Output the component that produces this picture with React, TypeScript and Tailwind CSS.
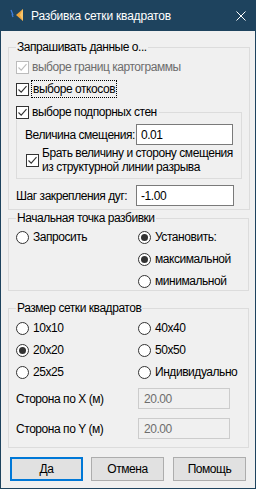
import React from 'react';

function Check({ checked, disabled }: { checked?: boolean; disabled?: boolean }) {
  const c = disabled ? '#bcbcbc' : '#333333';
  return (
    <span
      className={`flex h-[13px] w-[13px] shrink-0 items-center justify-center border bg-white ${
        disabled ? 'border-[#bcbcbc]' : 'border-[#333333]'
      }`}
    >
      {checked && (
        <svg width="11" height="11" viewBox="0 0 11 11">
          <path d="M1.5 5.5 L4.2 8.2 L9.5 2.2" fill="none" stroke={c} strokeWidth="1.1" />
        </svg>
      )}
    </span>
  );
}

function Radio({ checked }: { checked?: boolean }) {
  return (
    <span className="flex h-[13px] w-[13px] shrink-0 items-center justify-center rounded-full border border-[#333333] bg-white">
      {checked && <span className="h-[7px] w-[7px] rounded-full bg-[#333333]" />}
    </span>
  );
}

function RadioItem({ label, checked }: { label: string; checked?: boolean }) {
  return (
    <div className="flex h-[16px] items-center gap-[4px]">
      <Radio checked={checked} />
      <span>{label}</span>
    </div>
  );
}

function Field({ value, disabled, w }: { value: string; disabled?: boolean; w: string }) {
  return (
    <div
      className={`flex h-[21px] shrink-0 items-center border ${w} ${
        disabled
          ? 'border-[#cccccc] bg-[#f0f0f0] pl-[5px] text-[#6d6d6d]'
          : 'border-[#7a7a7a] bg-white pl-[4px] text-black'
      }`}
    >
      {value}
    </div>
  );
}

export default function App() {
  return (
    <div className="h-[489px] w-[256px] overflow-hidden whitespace-nowrap bg-[#1e435e] font-['Liberation_Sans',Arial,sans-serif] text-[12px] leading-[16px] tracking-[-0.45px] text-black">
      {/* заголовок */}
      <div className="flex h-[31px] items-center text-white">
        <svg width="18" height="16" viewBox="0 0 18 16" className="ml-[8px] shrink-0">
          <path d="M3 2 L5 7 M4 6 L5 9" stroke="#3d7bd9" strokeWidth="1.3" fill="none" />
          <path d="M15 1 L8 7 L15 13 Z" fill="#f0a53c" />
          <path d="M15 1 L12 7 L15 13 Z" fill="#f7c46a" />
        </svg>
        <span className="ml-[5px] tracking-[-0.2px]">Разбивка сетки квадратов</span>
        <svg width="10" height="10" viewBox="0 0 10 10" className="ml-auto mr-[10px]">
          <path d="M0.5 0.5 L9.5 9.5 M9.5 0.5 L0.5 9.5" stroke="white" strokeWidth="1" />
        </svg>
      </div>

      <div className="mx-px h-[457px] bg-[#f0f0f0] pt-[8px]">
        {/* Запрашивать данные */}
        <fieldset className="ml-[7px] w-[241px] border border-[#dcdcdc] px-[7px] pb-[3px]">
          <legend className="px-px">Запрашивать данные о...</legend>
          <div className="mt-px flex h-[22px] items-center gap-[3px] text-[#6d6d6d]">
            <Check checked disabled />
            <span>выборе границ картограммы</span>
          </div>
          <div className="flex h-[22px] items-center gap-[2px]">
            <Check checked />
            <span className="border border-dotted border-black px-px">выборе откосов</span>
          </div>
          <fieldset className="mt-[4px] w-[225px] border border-[#dcdcdc] px-[8px] pb-[4px]">
            <legend className="-ml-[9px] pr-[2px]">
              <span className="flex h-[16px] items-center gap-[3px]">
                <Check checked />
                <span>выборе подпорных стен</span>
              </span>
            </legend>
            <div className="mt-[4px] flex items-center">
              <span className="w-[111px] shrink-0">Величина смещения:</span>
              <Field value="0.01" w="w-[97px]" />
            </div>
            <div className="mt-px flex items-center gap-[3px] pl-px leading-[14px]">
              <Check checked />
              <span>
                Брать величину и сторону смещения
                <br />
                из структурной линии разрыва
              </span>
            </div>
          </fieldset>
          <div className="mt-[6px] flex items-center">
            <span className="w-[120px] shrink-0">Шаг закрепления дуг:</span>
            <Field value="-1.00" w="w-[98px]" />
          </div>
        </fieldset>

        {/* Начальная точка */}
        <fieldset className="ml-[7px] w-[241px] border border-[#dcdcdc] px-[7px] pb-px">
          <legend className="px-px">Начальная точка разбивки</legend>
          <div className="mt-[3px] grid grid-cols-[122px_1fr] gap-y-[6px]">
            <RadioItem label="Запросить" />
            <RadioItem label="Установить:" checked />
            <div />
            <RadioItem label="максимальной" checked />
            <div />
            <RadioItem label="минимальной" />
          </div>
        </fieldset>

        {/* Размер сетки */}
        <fieldset className="ml-[7px] mt-[9px] w-[241px] border border-[#dcdcdc] px-[7px] pb-[8px]">
          <legend className="px-px">Размер сетки квадратов</legend>
          <div className="mt-[4px] grid grid-cols-[122px_1fr] gap-y-[6px]">
            <RadioItem label="10x10" />
            <RadioItem label="40x40" />
            <RadioItem label="20x20" checked />
            <RadioItem label="50x50" />
            <RadioItem label="25x25" />
            <RadioItem label="Индивидуально" />
          </div>
          <div className="mt-[8px] flex items-center">
            <span className="w-[122px] shrink-0">Сторона по X (м)</span>
            <Field value="20.00" w="w-[92px]" disabled />
          </div>
          <div className="mt-[9px] flex items-center">
            <span className="w-[122px] shrink-0">Сторона по Y (м)</span>
            <Field value="20.00" w="w-[92px]" disabled />
          </div>
        </fieldset>

        {/* кнопки */}
        <div className="mt-[9px] flex">
          <button className="ml-[9px] h-[24px] w-[73px] border-2 border-[#0078d7] bg-[#e1e1e1]">Да</button>
          <button className="ml-[8px] h-[24px] w-[73px] border border-[#adadad] bg-[#e1e1e1]">Отмена</button>
          <button className="ml-[9px] h-[24px] w-[73px] border border-[#adadad] bg-[#e1e1e1]">Помощь</button>
        </div>
      </div>
    </div>
  );
}
